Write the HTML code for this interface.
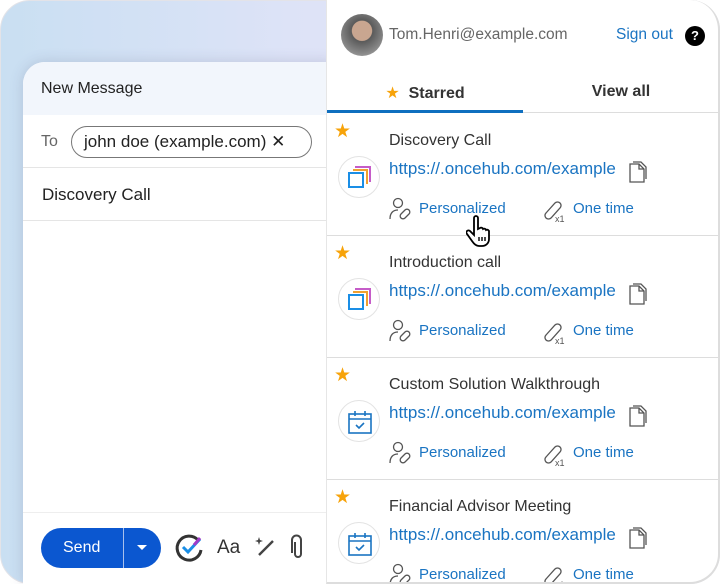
<!DOCTYPE html>
<html><head><meta charset="utf-8"><style>
*{margin:0;padding:0;box-sizing:border-box}
html,body{width:720px;height:584px;overflow:hidden}
body{font-family:"Liberation Sans","DejaVu Sans",sans-serif;background:#fff;position:relative}
.bg{position:absolute;left:0;top:0;width:720px;height:584px;border-radius:30px;background:linear-gradient(90deg,#c9dff2 0%,#dde3f7 40%,#ebe3fa 100%);border:1px solid #e3e3e8}
.left{position:absolute;left:23px;top:62px;width:310px;height:522px;background:#fff;border-top-left-radius:22px;box-shadow:0 0 14px rgba(60,60,100,.18)}
.lh{height:53px;background:#f2f6fc;border-top-left-radius:22px;padding:18px 0 0 18px;font-size:16px;color:#222;font-weight:500}
.to{height:53px;border-bottom:1px solid #e5e5e5;position:relative}
.to .l{position:absolute;left:18px;top:18px;font-size:16px;color:#666}
.chip{position:absolute;left:48px;top:11px;height:32px;width:241px;border:1px solid #777;border-radius:16px;font-size:17px;color:#222;padding:5px 0 0 12px}
.subj{height:53px;border-bottom:1px solid #e5e5e5;font-size:17px;color:#222;padding:17px 0 0 19px}
.foot{position:absolute;left:0;top:450px;width:310px;border-top:1px solid #eee;height:72px}
.send{position:absolute;left:18px;top:15px;width:120px;height:40px;background:#0b57d0;border-radius:20px;color:#fff;font-size:16px}
.send span{position:absolute;left:22px;top:11px}
.send i{position:absolute;left:82px;top:0;width:1px;height:40px;background:#a8c0ec}
.right{position:absolute;left:326px;top:0;width:394px;height:584px;background:#fff;border-top-right-radius:30px;border-right:2px solid #ddd;border-bottom:2px solid #ddd;border-bottom-right-radius:30px;border-left:1px solid #e6e6e6;overflow:hidden}
.av{position:absolute;left:14px;top:14px;width:42px;height:42px;border-radius:50%;background:radial-gradient(circle at 50% 40%,#c9a690 0 30%,#5a5a5a 32%,#8a8a8a 70%,#bbb 100%)}
.em{position:absolute;left:62px;top:26px;font-size:15.5px;color:#666}
.so{position:absolute;left:289px;top:26px;font-size:15.5px;color:#1a74c2}
.q{position:absolute;left:358px;top:26px;width:20px;height:20px;border-radius:50%;background:#000;color:#fff;font-size:13px;font-weight:bold;text-align:center;line-height:20px}
.tabs{position:absolute;left:0;top:80px;width:392px;height:33px;border-bottom:1px solid #ddd}
.t1{position:absolute;left:0;top:0;width:196px;height:33px;border-bottom:3px solid #0f6fbf;font-size:16px;font-weight:bold;color:#333;text-align:center;padding-top:3px}
.t2{position:absolute;left:196px;top:0;width:196px;font-size:16px;font-weight:bold;color:#333;text-align:center;padding-top:3px}
.star{color:#f7a30a}
.item{position:absolute;left:0;width:392px;height:122px;border-bottom:1px solid #ddd}
.item .st{position:absolute;left:7px;top:6px;font-size:19px;color:#f7a30a}
.item .ti{position:absolute;left:62px;top:18px;font-size:16px;color:#333}
.item .ln{position:absolute;left:62px;top:45px;font-size:17px;color:#1a74c2}
.item .cp{position:absolute;left:302px;top:47px}
.item .ic{position:absolute;left:11px;top:42px;width:42px;height:42px;border-radius:50%;border:1px solid #e3e3e3}
.item .m1{position:absolute;left:92px;top:86px;font-size:15px;color:#1a74c2}
.item .m2{position:absolute;left:246px;top:86px;font-size:15px;color:#1a74c2}
.item .i1{position:absolute;left:62px;top:83px}
.item .i2{position:absolute;left:215px;top:83px}
</style></head><body>
<div class="bg"></div>
<div class="left">
<div class="lh">New Message</div>
<div class="to"><span class="l">To</span><div class="chip">john doe (example.com) &#10005;</div></div>
<div class="subj">Discovery Call</div>
<div class="foot">
<div class="send"><span>Send</span><i></i><svg style="position:absolute;left:96px;top:17px" width="10" height="6"><path d="M0 0h10L5 5z" fill="#fff"/></svg></div>
<svg style="position:absolute;left:151px;top:19px" width="32" height="32" viewBox="0 0 32 32"><path d="M24 8A12 12 0 1 0 27 18" fill="none" stroke="#333" stroke-width="3"/><path d="M9 15l5 5 12-13" fill="none" stroke="#1a8ee6" stroke-width="3"/><path d="M20 13l6-7" stroke="#a03cc8" stroke-width="3"/></svg>
<div style="position:absolute;left:194px;top:24px;font-size:19px;color:#333">Aa</div>
<svg style="position:absolute;left:232px;top:22px" width="22" height="22"><path d="M4 20L18 6" stroke="#444" stroke-width="2.4"/><path d="M3 5l1-3 1 3 3 1-3 1-1 3-1-3-3-1z" fill="#444"/></svg>
<svg style="position:absolute;left:268px;top:21px" width="14" height="26"><path d="M4 8v12a3 3 0 0 0 6 0V6a4.5 4.5 0 0 0-9 0v13" fill="none" stroke="#444" stroke-width="2"/></svg>
</div>
</div>
<div class="right">
<div class="av"></div>
<div class="em">Tom.Henri@example.com</div>
<div class="so">Sign out</div>
<div class="q">?</div>
<div class="tabs"><div class="t1"><span class="star">&#9733;</span>&nbsp; Starred</div><div class="t2">View all</div></div>
<div id="items"></div>
</div>
<script>
var t=["Discovery Call","Introduction call","Custom Solution Walkthrough","Financial Advisor Meeting"];
var h="";
var multi='<svg width="28" height="28" viewBox="0 0 28 28" style="margin:7px"><path d="M9 3h15v15" fill="none" stroke="#c55cc8" stroke-width="2"/><path d="M7 6h14v14" fill="none" stroke="#f0a030" stroke-width="2"/><rect x="3" y="9" width="14" height="14" fill="none" stroke="#1a8ee6" stroke-width="2"/></svg>';
var cal='<svg width="28" height="28" viewBox="0 0 28 28" style="margin:7px"><rect x="3" y="6" width="22" height="19" fill="none" stroke="#1a74c2" stroke-width="1.6"/><path d="M3 11h22M9 3v5M19 3v5M10 17l3 3 5-5" fill="none" stroke="#1a74c2" stroke-width="1.6"/></svg>';
for(var i=0;i<4;i++){
h+='<div class="item" style="top:'+(114+i*122)+'px'+(i==3?';border-bottom:none':'')+'"><div class="st">&#9733;</div><div class="ti">'+t[i]+'</div><div class="ln">https://.oncehub.com/example</div>'+
'<svg class="cp" width="18" height="22"><path d="M1 3h9l5 5v13H1z" fill="none" stroke="#555" stroke-width="1.3"/><path d="M10 3v5h5M4 1h8l5 5v12" fill="none" stroke="#555" stroke-width="1.3"/></svg>'+
'<div class="ic">'+(i<2?multi:cal)+'</div>'+
'<svg class="i1" width="24" height="24"><circle cx="9" cy="6" r="4.5" fill="none" stroke="#555" stroke-width="1.3"/><path d="M1 22c0-6 3-9 8-9" fill="none" stroke="#555" stroke-width="1.3"/><path d="M12 17l4-4a2.5 2.5 0 0 1 4 4l-4 4a2.5 2.5 0 0 1-4-4z" fill="none" stroke="#555" stroke-width="1.3"/></svg><div class="m1">Personalized</div>'+
'<svg class="i2" width="26" height="26"><path d="M4 16l9-10a3.5 3.5 0 0 1 5 5l-9 10a3.5 3.5 0 0 1-5-5z" fill="none" stroke="#555" stroke-width="1.3"/><text x="13" y="25" font-size="9" fill="#555" font-family="Liberation Sans">x1</text></svg><div class="m2">One time</div></div>';
}
document.getElementById("items").innerHTML=h;
</script>
<svg style="position:absolute;left:466px;top:215px" width="28" height="32" viewBox="0 0 28 32"><path d="M8 3a2 2 0 0 1 4 0v11l2-1a2 2 0 0 1 3 1 2 2 0 0 1 3 1 2 2 0 0 1 3 2v7c0 4-3 7-7 7h-3c-3 0-5-2-7-5l-5-7a2 2 0 0 1 3-3l4 4z" fill="#fff" stroke="#000" stroke-width="1.8"/><path d="M13 22v4M16 22v4M19 22v4" stroke="#000" stroke-width="1.4"/></svg>
</body></html>
